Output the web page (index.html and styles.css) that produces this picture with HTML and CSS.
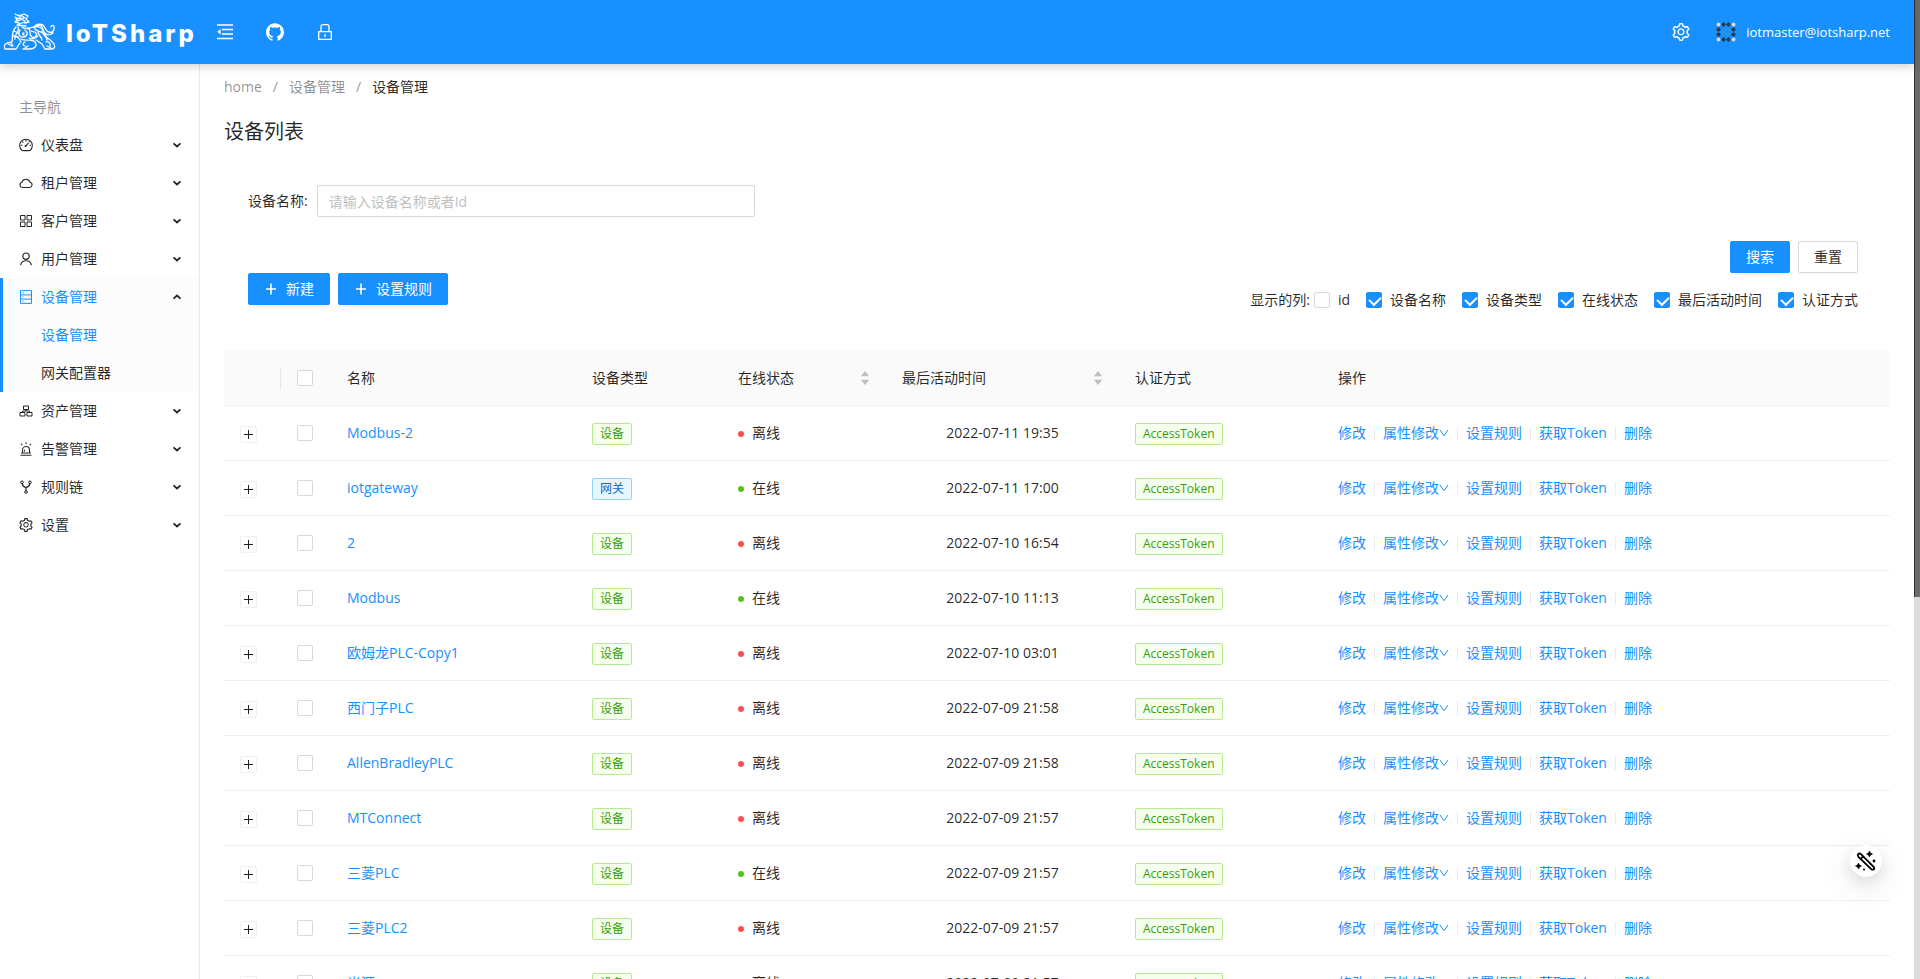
FILE: index.html
```html
<!DOCTYPE html>
<html lang="zh-CN">
<head>
<meta charset="utf-8">
<title>设备列表 - IoTSharp</title>
<link rel="stylesheet" href="styles.css">
</head>
<body>
<svg class="sprite" aria-hidden="true">
  <symbol id="i-setting" viewBox="64 64 896 896"><path fill="currentColor" d="M924.8 625.7l-65.5-56c3.1-19 4.7-38.4 4.7-57.8s-1.6-38.8-4.7-57.8l65.5-56a32.03 32.03 0 009.3-35.2l-.9-2.6a443.74 443.74 0 00-79.7-137.9l-1.8-2.1a32.12 32.12 0 00-35.1-9.5l-81.3 28.9c-30-24.6-63.5-44-99.7-57.6l-15.7-85a32.05 32.05 0 00-25.8-25.7l-2.7-.5c-52.1-9.4-106.9-9.4-159 0l-2.7.5a32.05 32.05 0 00-25.8 25.7l-15.8 85.4a351.86 351.86 0 00-99 57.4l-81.9-29.1a32 32 0 00-35.1 9.5l-1.8 2.1a446.02 446.02 0 00-79.7 137.9l-.9 2.6c-4.5 12.5-.8 26.5 9.3 35.2l66.3 56.6c-3.1 18.8-4.6 38-4.6 57.1 0 19.2 1.5 38.4 4.6 57.1L99 625.5a32.03 32.03 0 00-9.3 35.2l.9 2.6c18.1 50.4 44.9 96.9 79.7 137.9l1.8 2.1a32.12 32.12 0 0035.1 9.5l81.9-29.1c29.8 24.5 63.1 43.9 99 57.4l15.8 85.4a32.05 32.05 0 0025.8 25.7l2.7.5a449.4 449.4 0 00159 0l2.7-.5a32.05 32.05 0 0025.8-25.7l15.7-85a350 350 0 0099.7-57.6l81.3 28.9a32 32 0 0035.1-9.5l1.8-2.1c34.8-41.1 61.6-87.5 79.7-137.9l.9-2.6c4.5-12.3.8-26.3-9.3-35zM788.3 465.9c2.5 15.1 3.8 30.6 3.8 46.1s-1.3 31-3.8 46.1l-6.6 40.1 74.7 63.9a370.03 370.03 0 01-42.6 73.6L721 702.8l-31.4 25.8c-23.9 19.6-50.5 35-79.3 45.8l-38.1 14.3-17.9 97a377.5 377.5 0 01-85 0l-17.9-97.2-37.8-14.5c-28.5-10.8-55-26.2-78.7-45.7l-31.4-25.9-93.4 33.2c-17-22.9-31.2-47.6-42.6-73.6l75.5-64.5-6.5-40c-2.4-14.9-3.7-30.3-3.7-45.5 0-15.3 1.2-30.6 3.7-45.5l6.5-40-75.5-64.5c11.3-26.1 25.6-50.7 42.6-73.6l93.4 33.2 31.4-25.9c23.7-19.5 50.2-34.9 78.7-45.7l37.9-14.3 17.9-97.2c28.1-3.2 56.8-3.2 85 0l17.9 97 38.1 14.3c28.7 10.8 55.4 26.2 79.3 45.8l31.4 25.8 92.8-32.9c17 22.9 31.2 47.6 42.6 73.6L781.8 426l6.5 39.9zM512 326c-97.2 0-176 78.8-176 176s78.8 176 176 176 176-78.8 176-176-78.8-176-176-176zm79.2 255.2A111.6 111.6 0 01512 614c-29.9 0-58-11.7-79.2-32.8A111.6 111.6 0 01400 502c0-29.9 11.7-58 32.8-79.2C454 401.6 482.1 390 512 390c29.9 0 58 11.6 79.2 32.8A111.6 111.6 0 01624 502c0 29.9-11.7 58-32.8 79.2z"/></symbol>
  <symbol id="i-github" viewBox="64 64 896 896"><path fill="currentColor" d="M511.6 76.3C264.3 76.2 64 276.4 64 523.5 64 718.9 189.3 885 363.8 946c23.5 5.9 19.9-10.8 19.9-22.2v-77.5c-135.7 15.9-141.2-73.9-150.3-88.9C215 726 171.5 718 184.5 703c30.9-15.9 62.4 4 98.9 57.9 26.4 39.1 77.9 32.5 104 26 5.7-23.5 17.9-44.5 34.7-60.8-140.6-25.2-199.2-111-199.2-213 0-49.5 16.3-95 48.3-131.7-20.4-60.5 1.9-112.3 4.9-120 58.1-5.2 118.5 41.6 123.2 45.3 33-8.9 70.7-13.6 112.9-13.6 42.4 0 80.2 4.9 113.5 13.9 11.3-8.6 67.3-48.8 121.3-43.9 2.9 7.7 24.7 58.3 5.5 118 32.4 36.8 48.9 82.7 48.9 132.3 0 102.2-59 188.1-200 212.9a127.5 127.5 0 0138.1 91v112.5c.8 9 0 17.9 15 17.9 177.1-59.7 304.6-227 304.6-424.1 0-247.2-200.4-447.3-447.5-447.3z"/></symbol>
  <symbol id="i-fold" viewBox="0 0 16 16"><path d="M0 1h16M5 5.5h11M5 10h11M0 14.5h16" fill="none" stroke="currentColor" stroke-width="1.3"/><path d="M3.7 5v5.6L.2 7.8z" fill="currentColor"/></symbol>
  <symbol id="i-lock" viewBox="0 0 16 18"><path d="M1.7 8.7h12.6v7.6H1.7zM4 8.5V3.6Q4 1.7 6 1.7h4q2 0 2 1.9v4.9M8 11v3" fill="none" stroke="currentColor" stroke-width="1.3"/></symbol>
  <symbol id="i-dashboard" viewBox="0 0 14 14"><path d="M3 12.4A6.3 6.3 0 1 1 11 12.4Q7 12.8 3 12.4zM6.5 8.1l3.2-3.2M7 2v1.5M3.3 3.7l1 1M2 7.3h1.4M10.6 7.3H12M10.1 4l.6-.6" fill="none" stroke="currentColor" stroke-width="1.1"/><circle cx="6.5" cy="8" r="1" fill="currentColor"/></symbol>
  <symbol id="i-cloud" viewBox="0 0 14 14"><path d="M3.3 11.5A2.7 2.7 0 0 1 3 6.200A4.200 4.200 0 0 1 11 6.200A2.700 2.700 0 0 1 10.700 11.500z" fill="none" stroke="currentColor" stroke-width="1.1"/></symbol>
  <symbol id="i-apps" viewBox="0 0 14 14"><path d="M1.500 1.500h4.500v4.500H1.500zM8 1.500h4.500v4.500H8zM1.500 8h4.500v4.500H1.500zM8 8h4.500v4.500H8z" fill="none" stroke="currentColor"/></symbol>
  <symbol id="i-user" viewBox="0 0 14 14"><circle cx="7" cy="4.200" r="3.200" fill="none" stroke="currentColor" stroke-width="1.200"/><path d="M1.600 13.200A5.500 5.500 0 0 1 12.400 13.200" fill="none" stroke="currentColor" stroke-width="1.200"/></symbol>
  <symbol id="i-device" viewBox="0 0 14 14"><path d="M1.500.6h11v12.800h-11zM1.500 4.900h11M1.500 9.100h11" fill="none" stroke="currentColor"/><path d="M3.500 2.700h1M3.500 7h1M3.500 11.200h1" stroke="currentColor" stroke-width="1.200"/></symbol>
  <symbol id="i-asset" viewBox="0 0 14 14"><path d="M4.500 2h5v3.500h-5zM1 8.500h5V12H1zM8 8.500h5V12H8zM7 5.500V7M3.500 8.500V7h7v1.500" fill="none" stroke="currentColor"/></symbol>
  <symbol id="i-alert" viewBox="0 0 14 14"><path d="M3.500 11V8a3.500 3.500 0 0 1 7 0V11M1.500 13.300h11M2 11h10M7 .3V2.200M2.200 1.800l1.100 1.300M11.800 1.800l-1.100 1.300M5.500 9.500V7.800" fill="none" stroke="currentColor" stroke-width="1.100"/></symbol>
  <symbol id="i-fork" viewBox="0 0 14 14"><path d="M3.200 3.600Q3.400 6.300 7 7.500Q10.600 6.300 10.800 3.600M7 7.500v3.200" fill="none" stroke="currentColor" stroke-width="1.200"/><g fill="none" stroke="currentColor"><circle cx="3" cy="2.300" r="1.300"/><circle cx="11" cy="2.300" r="1.300"/><circle cx="7" cy="12" r="1.300"/></g></symbol>
  <symbol id="i-chev" viewBox="0 0 10 10"><path d="M1.500 3.300L5 6.500 8.500 3.300" fill="none" stroke="currentColor" stroke-width="1.700"/></symbol>
  <symbol id="i-down" viewBox="0 0 10 10"><path d="M1 2L5 7.700 9 2" fill="none" stroke="currentColor"/></symbol>
  <symbol id="i-plus" viewBox="0 0 14 14"><path d="M7 1.500v11M2 7h10" stroke="currentColor" stroke-width="1.600"/></symbol>
  <symbol id="i-sort" viewBox="0 0 10 16"><path d="M5 1l4.200 5.200H.8zM5 15l4.200-5.200H.8z" fill="currentColor"/></symbol>
</svg>

<div class="app">
  <header class="header">
    <a class="brand" href="#">
      <svg class="beast" viewBox="0 0 52 38" aria-hidden="true">
        <g fill="none" stroke="currentColor" stroke-width="1.300" stroke-linecap="round" stroke-linejoin="round">
          <path d="M11 1l4 2 5-2 4 2-2 3 3 3-4 1M11 4l3 2-3 3 4 1M14 8l6-3M15 11l6-2M17 6l4 2M13 12l9 1M15 2l2 3M12 6l4-1M18 3l3 2"/>
          <path d="M12 14c-5 5-3 10-4 15l-5 1c-3 1-3 4-2 6h11l4-6M14 14c2 5-4 7-3 12M10 18l4 2M9 23l5 1"/>
          <path d="M18 14c3 3 8 1 12 0s7 0 9 3M16 17c-3 4 0 8 4 7s4-5 1-7M20 20c-2 0-2 2 0 2M24 15c4 3 0 7 4 9s6-3 3-5"/>
          <path d="M17 26c5 3 11-1 14 3s-1 7-5 7h-7M21 29c-2 1-3 3 0 4M25 25c4 2 6 0 9-2M14 24l3 5M27 18l3 1"/>
          <path d="M31 16c3 4 8 2 10 6s7 5 9 9-1 5-3 5h-6l-3-5-6-4M34 19c0 3 4 5 4 8M38 18c0 4 5 5 5 9M42 29c2-1 5 1 4 4"/>
          <path d="M30 15c2-5 9-5 11 0s8 6 9 1-3-4-3-2M33 13c3-2 6 0 6 4 1 5 6 6 10 3"/>
          <path d="M4 31l4 2M7 30l2 3M24 33l-3 2M43 33l4 2"/>
        </g>
      </svg>
      <span class="brand-name">IoTSharp</span>
    </a>
    <nav class="tools">
      <button class="tool" aria-label="收起菜单"><svg class="ic16"><use href="#i-fold"/></svg></button>
      <a class="tool" href="#" aria-label="GitHub"><svg class="ic18"><use href="#i-github"/></svg></a>
      <button class="tool" aria-label="锁屏"><svg class="ic18"><use href="#i-lock"/></svg></button>
    </nav>
    <div class="account">
      <button class="tool" aria-label="设置"><svg class="ic18"><use href="#i-setting"/></svg></button>
      <button class="user">
        <svg class="avatar" viewBox="0 0 20 20" aria-hidden="true">
          <g fill="#2b3a4a"><path d="M7.500 0L10 2.500 7.500 5 5 2.500zM12.500 0L15 2.500 12.500 5 10 2.500zM7.500 15l2.500 2.500L7.500 20 5 17.500zM12.500 15l2.500 2.500-2.500 2.500-2.500-2.500zM2.500 5L5 7.500 2.500 10 0 7.500zM2.500 10L5 12.500 2.500 15 0 12.500zM17.500 5L20 7.500 17.500 10 15 7.500zM17.500 10l2.500 2.500-2.500 2.500-2.500-2.500z"/></g>
          <g fill="#cfdeea"><circle cx="2.500" cy="2.500" r="2"/><circle cx="17.500" cy="2.500" r="2"/><circle cx="2.500" cy="17.500" r="2"/><circle cx="17.500" cy="17.500" r="2"/></g>
          <path d="M9.500 5.500v3M5.500 10.500h3M11.500 9l3-1.500M10.500 11.500v3M6 7l2 1.500M12 11l2.500 1" stroke="#2a9fb8" fill="none"/>
        </svg>
        <span>iotmaster@iotsharp.net</span>
      </button>
    </div>
  </header>

  <div class="body">
    <aside class="sidebar">
      <div class="nav-title">主导航</div>
      <ul class="nav">
        <li><a href="#"><svg class="ic14"><use href="#i-dashboard"/></svg><span>仪表盘</span><svg class="chev"><use href="#i-chev"/></svg></a></li>
        <li><a href="#"><svg class="ic14"><use href="#i-cloud"/></svg><span>租户管理</span><svg class="chev"><use href="#i-chev"/></svg></a></li>
        <li><a href="#"><svg class="ic14"><use href="#i-apps"/></svg><span>客户管理</span><svg class="chev"><use href="#i-chev"/></svg></a></li>
        <li><a href="#"><svg class="ic14"><use href="#i-user"/></svg><span>用户管理</span><svg class="chev"><use href="#i-chev"/></svg></a></li>
        <li class="open">
          <a class="on" href="#"><svg class="ic14"><use href="#i-device"/></svg><span>设备管理</span><svg class="chev up"><use href="#i-chev"/></svg></a>
          <ul class="sub">
            <li><a class="on" href="#">设备管理</a></li>
            <li><a href="#">网关配置器</a></li>
          </ul>
        </li>
        <li><a href="#"><svg class="ic14"><use href="#i-asset"/></svg><span>资产管理</span><svg class="chev"><use href="#i-chev"/></svg></a></li>
        <li><a href="#"><svg class="ic14"><use href="#i-alert"/></svg><span>告警管理</span><svg class="chev"><use href="#i-chev"/></svg></a></li>
        <li><a href="#"><svg class="ic14"><use href="#i-fork"/></svg><span>规则链</span><svg class="chev"><use href="#i-chev"/></svg></a></li>
        <li><a href="#"><svg class="ic14"><use href="#i-setting"/></svg><span>设置</span><svg class="chev"><use href="#i-chev"/></svg></a></li>
      </ul>
    </aside>

    <main class="main">
      <nav class="crumbs"><a href="#">home</a><i>/</i><a href="#">设备管理</a><i>/</i><span>设备管理</span></nav>
      <h1 class="title">设备列表</h1>

      <form class="search">
        <div class="field"><label for="q">设备名称:</label><input id="q" type="text" placeholder="请输入设备名称或者Id"></div>
        <div class="search-btns"><button class="btn primary" type="button">搜索</button><button class="btn" type="button">重置</button></div>
      </form>
      <div class="toolbar">
        <div class="create">
          <button class="btn primary"><svg class="ic14"><use href="#i-plus"/></svg>新建</button>
          <button class="btn primary"><svg class="ic14"><use href="#i-plus"/></svg>设置规则</button>
        </div>
        <div class="columns">
          <span>显示的列:</span>
          <label><input type="checkbox">id</label>
          <label><input type="checkbox" checked>设备名称</label>
          <label><input type="checkbox" checked>设备类型</label>
          <label><input type="checkbox" checked>在线状态</label>
          <label><input type="checkbox" checked>最后活动时间</label>
          <label><input type="checkbox" checked>认证方式</label>
        </div>
      </div>

      <table class="grid">
        <colgroup><col class="c-exp"><col class="c-chk"><col class="c-name"><col class="c-type"><col class="c-stat"><col class="c-time"><col class="c-auth"><col></colgroup>
        <thead>
          <tr><th class="exp-h"></th><th><input type="checkbox" aria-label="全选"></th><th>名称</th><th>设备类型</th><th><div class="sorter">在线状态<svg><use href="#i-sort"/></svg></div></th><th><div class="sorter">最后活动时间<svg><use href="#i-sort"/></svg></div></th><th>认证方式</th><th>操作</th></tr>
        </thead>
        <tbody>
          <tr><td><button class="exp" aria-label="展开"></button></td><td><input type="checkbox" aria-label="选择"></td><td><a href="#">Modbus-2</a></td><td><span class="tag">设备</span></td><td><span class="dot off"></span>离线</td><td class="time">2022-07-11 19:35</td><td><span class="tag">AccessToken</span></td><td class="ops"><a href="#">修改</a><a href="#">属性修改<svg><use href="#i-down"/></svg></a><a href="#">设置规则</a><a href="#">获取Token</a><a href="#">删除</a></td></tr>
          <tr><td><button class="exp" aria-label="展开"></button></td><td><input type="checkbox" aria-label="选择"></td><td><a href="#">iotgateway</a></td><td><span class="tag gateway">网关</span></td><td><span class="dot"></span>在线</td><td class="time">2022-07-11 17:00</td><td><span class="tag">AccessToken</span></td><td class="ops"><a href="#">修改</a><a href="#">属性修改<svg><use href="#i-down"/></svg></a><a href="#">设置规则</a><a href="#">获取Token</a><a href="#">删除</a></td></tr>
          <tr><td><button class="exp" aria-label="展开"></button></td><td><input type="checkbox" aria-label="选择"></td><td><a href="#">2</a></td><td><span class="tag">设备</span></td><td><span class="dot off"></span>离线</td><td class="time">2022-07-10 16:54</td><td><span class="tag">AccessToken</span></td><td class="ops"><a href="#">修改</a><a href="#">属性修改<svg><use href="#i-down"/></svg></a><a href="#">设置规则</a><a href="#">获取Token</a><a href="#">删除</a></td></tr>
          <tr><td><button class="exp" aria-label="展开"></button></td><td><input type="checkbox" aria-label="选择"></td><td><a href="#">Modbus</a></td><td><span class="tag">设备</span></td><td><span class="dot"></span>在线</td><td class="time">2022-07-10 11:13</td><td><span class="tag">AccessToken</span></td><td class="ops"><a href="#">修改</a><a href="#">属性修改<svg><use href="#i-down"/></svg></a><a href="#">设置规则</a><a href="#">获取Token</a><a href="#">删除</a></td></tr>
          <tr><td><button class="exp" aria-label="展开"></button></td><td><input type="checkbox" aria-label="选择"></td><td><a href="#">欧姆龙PLC-Copy1</a></td><td><span class="tag">设备</span></td><td><span class="dot off"></span>离线</td><td class="time">2022-07-10 03:01</td><td><span class="tag">AccessToken</span></td><td class="ops"><a href="#">修改</a><a href="#">属性修改<svg><use href="#i-down"/></svg></a><a href="#">设置规则</a><a href="#">获取Token</a><a href="#">删除</a></td></tr>
          <tr><td><button class="exp" aria-label="展开"></button></td><td><input type="checkbox" aria-label="选择"></td><td><a href="#">西门子PLC</a></td><td><span class="tag">设备</span></td><td><span class="dot off"></span>离线</td><td class="time">2022-07-09 21:58</td><td><span class="tag">AccessToken</span></td><td class="ops"><a href="#">修改</a><a href="#">属性修改<svg><use href="#i-down"/></svg></a><a href="#">设置规则</a><a href="#">获取Token</a><a href="#">删除</a></td></tr>
          <tr><td><button class="exp" aria-label="展开"></button></td><td><input type="checkbox" aria-label="选择"></td><td><a href="#">AllenBradleyPLC</a></td><td><span class="tag">设备</span></td><td><span class="dot off"></span>离线</td><td class="time">2022-07-09 21:58</td><td><span class="tag">AccessToken</span></td><td class="ops"><a href="#">修改</a><a href="#">属性修改<svg><use href="#i-down"/></svg></a><a href="#">设置规则</a><a href="#">获取Token</a><a href="#">删除</a></td></tr>
          <tr><td><button class="exp" aria-label="展开"></button></td><td><input type="checkbox" aria-label="选择"></td><td><a href="#">MTConnect</a></td><td><span class="tag">设备</span></td><td><span class="dot off"></span>离线</td><td class="time">2022-07-09 21:57</td><td><span class="tag">AccessToken</span></td><td class="ops"><a href="#">修改</a><a href="#">属性修改<svg><use href="#i-down"/></svg></a><a href="#">设置规则</a><a href="#">获取Token</a><a href="#">删除</a></td></tr>
          <tr><td><button class="exp" aria-label="展开"></button></td><td><input type="checkbox" aria-label="选择"></td><td><a href="#">三菱PLC</a></td><td><span class="tag">设备</span></td><td><span class="dot"></span>在线</td><td class="time">2022-07-09 21:57</td><td><span class="tag">AccessToken</span></td><td class="ops"><a href="#">修改</a><a href="#">属性修改<svg><use href="#i-down"/></svg></a><a href="#">设置规则</a><a href="#">获取Token</a><a href="#">删除</a></td></tr>
          <tr><td><button class="exp" aria-label="展开"></button></td><td><input type="checkbox" aria-label="选择"></td><td><a href="#">三菱PLC2</a></td><td><span class="tag">设备</span></td><td><span class="dot off"></span>离线</td><td class="time">2022-07-09 21:57</td><td><span class="tag">AccessToken</span></td><td class="ops"><a href="#">修改</a><a href="#">属性修改<svg><use href="#i-down"/></svg></a><a href="#">设置规则</a><a href="#">获取Token</a><a href="#">删除</a></td></tr>
          <tr><td><button class="exp" aria-label="展开"></button></td><td><input type="checkbox" aria-label="选择"></td><td><a href="#">光源</a></td><td><span class="tag">设备</span></td><td><span class="dot off"></span>离线</td><td class="time">2022-07-09 21:57</td><td><span class="tag">AccessToken</span></td><td class="ops"><a href="#">修改</a><a href="#">属性修改<svg><use href="#i-down"/></svg></a><a href="#">设置规则</a><a href="#">获取Token</a><a href="#">删除</a></td></tr>
        </tbody>
      </table>
    </main>
  </div>
</div>
<div class="scroll"><div class="thumb"></div></div>

<button class="wand" aria-label="主题设置">
  <svg viewBox="0 0 20 20" aria-hidden="true">
    <path d="M2.200 3.200Q3.400 1.800 5 3.200L17.800 16Q18.800 17.600 17.600 18.400 16.400 19.200 15 17.800L2.400 5.800Q1.200 4.400 2.200 3.200zM5 7.600L7.600 5" fill="none" stroke="#000" stroke-width="1.800"/>
    <path d="M13.500 0l1 2 2 1-2 1-1 2-1-2-2-1 2-1zM2.500 12l1 2 2 1-2 1-1 2-1-2-2-1 2-1z" stroke="#000" stroke-width=".6"/>
    <circle cx="18" cy="10" r="1.400"/><circle cx="8" cy="18.500" r="1"/>
  </svg>
</button>
</body>
</html>
```
FILE: styles.css
```css
* { box-sizing: border-box; }
body {
  margin: 0;
  height: 100vh;
  display: flex;
  overflow: hidden;
  background: #fff;
  color: rgba(0, 0, 0, .85);
  font: 14px/22px "Open Sans", "Noto Sans CJK SC", sans-serif;
}
a { color: #1890ff; text-decoration: none; }
button { font: inherit; color: inherit; padding: 0; border: 0; background: none; cursor: pointer; }
ul { list-style: none; margin: 0; padding: 0; }
svg { display: block; flex: none; }
.sprite { position: absolute; width: 0; height: 0; }
.ic14 { width: 14px; height: 14px; }
.ic16 { width: 16px; height: 16px; }
.ic18 { width: 18px; height: 18px; }

.app { flex: 1; min-width: 0; display: flex; flex-direction: column; }

.header {
  position: relative;
  z-index: 2;
  flex: none;
  height: 64px;
  display: flex;
  align-items: center;
  background: #1890ff;
  color: #fff;
  box-shadow: 0 2px 10px rgba(0, 0, 0, .2);
}
.brand { display: flex; align-items: center; gap: 10px; width: 200px; padding-left: 4px; color: #fff; }
.beast { width: 52px; height: 38px; }
.brand-name { padding-top: 4px; font: 800 24px/32px Inter, sans-serif; letter-spacing: 3px; }
.tools { display: flex; align-items: center; gap: 16px; padding-left: 8px; }
.tool { width: 34px; height: 36px; display: flex; align-items: center; justify-content: center; color: #fff; }
.account { margin-left: auto; display: flex; align-items: center; gap: 18px; padding-right: 24px; }
.user { display: flex; align-items: center; gap: 10px; color: #fff; font-size: 13px; }
.avatar { width: 20px; height: 20px; }

.body { flex: 1; min-height: 0; display: flex; }
.sidebar { flex: none; width: 200px; border-right: 1px solid #f0e6e6; padding-top: 24px; }
.nav-title { padding: 8px 19px; line-height: 22px; color: rgba(0, 0, 0, .45); }
.nav a { display: flex; align-items: center; gap: 8px; height: 38px; padding: 0 17px 0 19px; color: rgba(0, 0, 0, .85); }
.nav a.on { color: #1890ff; }
.nav .open { background: #fcfcfc; box-shadow: inset 3px 0 #1890ff; }
.nav .sub a { padding-left: 41px; }
.nav .chev { width: 10px; height: 10px; margin-left: auto; color: #222; }
.chev.up { transform: rotate(180deg); }

.main { flex: 1; min-width: 0; padding: 12px 24px 0; overflow: hidden; }
.crumbs { display: flex; gap: 11px; color: rgba(0, 0, 0, .85); }
.crumbs a, .crumbs i { color: rgba(0, 0, 0, .45); font-style: normal; }
.title { margin: 20px 0 0; font-size: 20px; font-weight: 400; line-height: 28px; }

.search { padding: 39px 32px 0 24px; }
.field { display: flex; align-items: center; gap: 9px; }
.field input {
  width: 438px;
  height: 32px;
  padding: 4px 11px;
  border: 1px solid #d9d9d9;
  border-radius: 2px;
  font: inherit;
}
.field input::placeholder { color: #bfbfbf; }
.search-btns { display: flex; justify-content: flex-end; gap: 8px; margin-top: 24px; }
.btn {
  height: 32px;
  padding: 0 15px;
  display: flex;
  align-items: center;
  gap: 8px;
  border: 1px solid #d9d9d9;
  border-radius: 2px;
  background: #fff;
  box-shadow: 0 2px 0 rgba(0, 0, 0, .02);
}
.btn.primary { background: #1890ff; border-color: #1890ff; color: #fff; box-shadow: 0 2px 0 rgba(0, 0, 0, .04); }
.toolbar { display: flex; justify-content: space-between; padding: 0 32px 0 24px; }
.create { display: flex; gap: 8px; }
.columns { display: flex; align-items: center; gap: 16px; padding-top: 16px; }
.columns span { margin-right: -12px; }
.columns label { display: flex; align-items: center; gap: 8px; }

input[type=checkbox] {
  appearance: none;
  display: block;
  width: 16px;
  height: 16px;
  margin: 0;
  border: 1px solid #d9d9d9;
  border-radius: 2px;
  background: #fff;
}
input[type=checkbox]:checked { background: #1890ff; border-color: #1890ff; }
input[type=checkbox]:checked::after {
  content: "";
  display: block;
  width: 6px;
  height: 9px;
  margin: 1px 0 0 4px;
  border: solid #fff;
  border-width: 0 2px 2px 0;
  transform: rotate(45deg);
}

.grid { width: 100%; margin-top: 40px; border-collapse: separate; border-spacing: 0; table-layout: fixed; }
.c-exp { width: 57px; }
.c-chk { width: 50px; }
.c-name { width: 245px; }
.c-type { width: 146px; }
.c-stat { width: 164px; }
.c-time { width: 233px; }
.c-auth { width: 203px; }
.grid th, .grid td { height: 55px; padding: 0 16px; text-align: left; font-weight: 400; border-bottom: 1px solid #f0f0f0; white-space: nowrap; }
.grid th { background: #fafafa; }
.grid .exp-h { background: linear-gradient(#e8e8e8, #e8e8e8) right center / 1px 23px no-repeat #fafafa; }
.grid td.time { text-align: center; }
.sorter { display: flex; align-items: center; justify-content: space-between; color: inherit; }
.sorter svg { width: 10px; height: 16px; color: #bfbfbf; }
.exp {
  display: block;
  width: 17px;
  height: 17px;
  margin-top: 2px;
  border: 1px solid #f0f0f0;
  border-radius: 2px;
  background: linear-gradient(#222, #222) center / 9px 1px no-repeat, linear-gradient(#222, #222) center / 1px 9px no-repeat #fff;
}
.tag {
  display: inline-block;
  padding: 0 7px;
  border: 1px solid #b7eb8f;
  border-radius: 2px;
  background: #f6ffed;
  color: #389e0d;
  font-size: 12px;
  line-height: 20px;
  vertical-align: middle;
}
.tag.gateway { border-color: #91d5ff; background: #e6f7ff; color: #096dd9; }
.dot { display: inline-block; width: 6px; height: 6px; margin-right: 8px; border-radius: 50%; background: #52c41a; vertical-align: middle; }
.dot.off { background: #ff4d4f; }
.ops a { display: inline-block; }
.ops a + a::before { content: ""; display: inline-block; width: 1px; height: 13px; margin: 0 8px; background: #ececec; vertical-align: -2px; }
.ops svg { display: inline-block; width: 10px; height: 10px; }

.scroll { flex: none; width: 6px; background: #dadce0; }
.thumb { height: 61%; background: #6b6b6b; border-left: 1px solid #333; }

.wand {
  position: fixed;
  z-index: 3;
  right: 38px;
  bottom: 102px;
  width: 32px;
  height: 32px;
  display: flex;
  align-items: center;
  justify-content: center;
  border-radius: 50%;
  background: #fff;
  box-shadow: 0 6px 16px rgba(0, 0, 0, .1), 0 9px 28px 8px rgba(0, 0, 0, .05);
}
.wand svg { width: 20px; height: 20px; overflow: visible; }
```
